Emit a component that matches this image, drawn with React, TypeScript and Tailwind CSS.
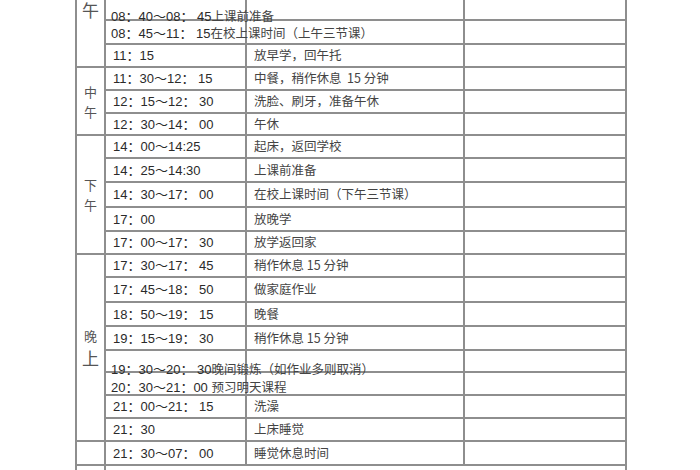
type Row = {
  time: string;
  task?: string;
  shift?: string;
};

const rows: Row[] = [
  { time: '08：40～08： 45', task: '上课前准备', shift: 'top-[7px]' },
  { time: '08：45～11： 15', task: '在校上课时间（上午三节课）', shift: 'top-[1px]' },
  { time: '11：15', task: '放早学，回午托' },
  { time: '11：30～12： 15', task: '中餐，稍作休息  15 分钟' },
  { time: '12：15～12： 30', task: '洗脸、刷牙，准备午休' },
  { time: '12：30～14： 00', task: '午休' },
  { time: '14：00～14:25', task: '起床，返回学校' },
  { time: '14：25～14:30', task: '上课前准备' },
  { time: '14：30～17： 00', task: '在校上课时间（下午三节课）' },
  { time: '17：00', task: '放晚学' },
  { time: '17：00～17： 30', task: '放学返回家' },
  { time: '17：30～17： 45', task: '稍作休息 15 分钟' },
  { time: '17：45～18： 50', task: '做家庭作业' },
  { time: '18：50～19： 15', task: '晚餐' },
  { time: '19：15～19： 30', task: '稍作休息 15 分钟' },
  { time: '19：30～20： 30', task: '晚间锻炼（如作业多则取消）', shift: 'top-[8px]' },
  { time: '20：30～21：00 ', task: '预习明天课程', shift: 'top-[4px]' },
  { time: '21：00～21： 15', task: '洗澡' },
  { time: '21：30', task: '上床睡觉' },
  { time: '21：30～07： 00', task: '睡觉休息时间' },
];

const line = 'border-[#8e8e8e]';
const timeFont = "font-['Liberation_Sans','Noto_Sans_CJK_SC',sans-serif]";
const taskFont = "font-['Noto_Sans_CJK_SC',sans-serif]";

function TimeCells({ row }: { row: Row }) {
  if (row.shift) {
    // scanned rows where the text runs across the column line
    return (
      <>
        <div className={`border-r-2 border-b-2 ${line} flex items-center pl-[5px] overflow-visible`}>
          <span className={`relative ${row.shift} whitespace-nowrap text-[13px] leading-none`}>
            <span className={`${timeFont} text-[#2a2a2a]`}>{row.time}</span>
            <span className={`${taskFont} text-[#444] text-[12.5px]`}>{row.task}</span>
          </span>
        </div>
        <div className={`border-r-2 border-b-2 ${line}`} />
        <div className={`border-r-2 border-b-2 ${line}`} />
      </>
    );
  }
  return (
    <>
      <div className={`border-r-2 border-b-2 ${line} flex items-center pl-[7px]`}>
        <span className={`${timeFont} whitespace-nowrap text-[13px] leading-none text-[#2a2a2a]`}>{row.time}</span>
      </div>
      <div className={`border-r-2 border-b-2 ${line} flex items-center pl-[7px]`}>
        <span className={`${taskFont} whitespace-pre text-[12.5px] leading-none text-[#444]`}>{row.task}</span>
      </div>
      <div className={`border-r-2 border-b-2 ${line}`} />
    </>
  );
}

function Label({ chars, span, top }: { chars: { c: string; big?: boolean }[]; span: string; top?: boolean }) {
  return (
    <div
      className={`${span} border-r-2 border-b-2 ${line} flex flex-col items-center ${
        top ? 'justify-start' : 'justify-center gap-[5px]'
      } ${taskFont} text-[#555]`}
    >
      {chars.map((ch, i) => (
        <span key={i} className={ch.big ? 'text-[17px] leading-[19px]' : 'text-[13px] leading-[15px]'}>
          {ch.c}
        </span>
      ))}
    </div>
  );
}

type Section = { chars: { c: string; big?: boolean }[]; span: string; from: number; to: number; top?: boolean };

const sections: Section[] = [
  { chars: [{ c: '午', big: true }], span: 'row-span-3', from: 0, to: 3, top: true },
  { chars: [{ c: '中' }, { c: '午' }], span: 'row-span-3', from: 3, to: 6 },
  { chars: [{ c: '下' }, { c: '午' }], span: 'row-span-5', from: 6, to: 11 },
  { chars: [{ c: '晚' }, { c: '上', big: true }], span: 'row-span-8', from: 11, to: 19 },
  { chars: [], span: 'row-span-1', from: 19, to: 20 },
];

function SectionRows({ s }: { s: Section }) {
  return (
    <>
      <Label chars={s.chars} span={s.span} top={s.top} />
      {rows.slice(s.from, s.to).map((row, i) => (
        <TimeCells key={i} row={row} />
      ))}
    </>
  );
}

export default function App() {
  return (
    <div className="h-[470px] w-[700px] overflow-hidden bg-white">
      <div
        className={`ml-[75px] grid w-[550px] grid-cols-[29px_141px_218px_162px] grid-rows-[21px_24px_23px_23px_23px_22px_23px_24px_25px_24px_23px_23px_25px_24px_24px_22px_23px_23px_23px_24px_10px] border-l-2 ${line}`}
      >
        {sections.map((s, si) => (
          <SectionRows key={si} s={s} />
        ))}
        <div className={`border-r-2 ${line}`} />
        <div className={`col-span-3 border-r-2 ${line}`} />
      </div>
    </div>
  );
}
